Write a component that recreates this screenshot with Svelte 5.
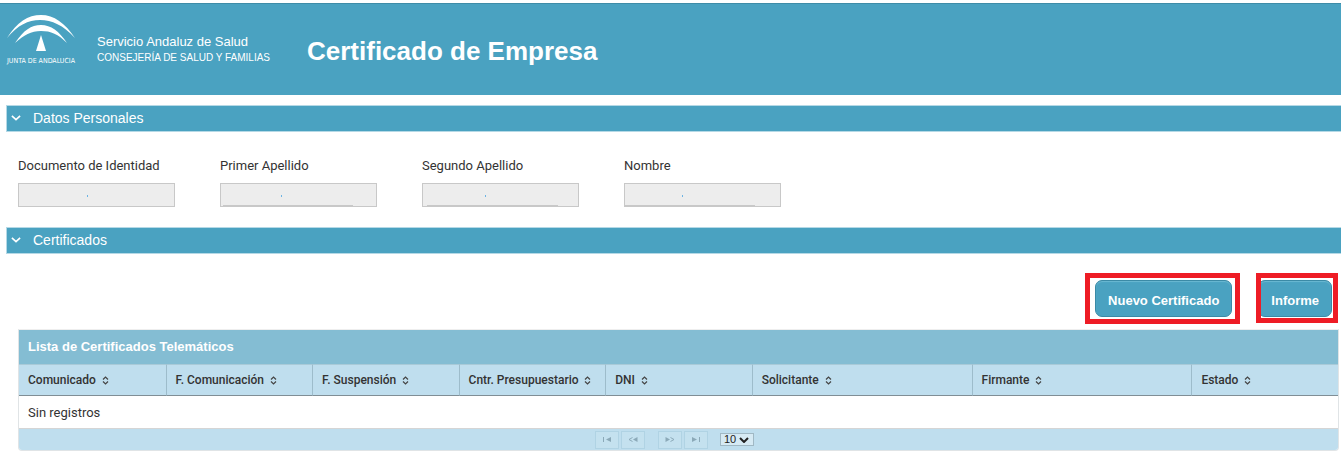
<script>
  const fields = [
    { id: "documento", label: "Documento de Identidad", mark: 68, line: 0, lineStart: 0 },
    { id: "apellido1", label: "Primer Apellido", mark: 60, line: 130, lineStart: 2 },
    { id: "apellido2", label: "Segundo Apellido", mark: 62, line: 131, lineStart: 4 },
    { id: "nombre", label: "Nombre", mark: 57, line: 130, lineStart: 0 },
  ];

  const columns = [
    { name: "Comunicado", size: "small" },
    { name: "F. Comunicación", size: "small" },
    { name: "F. Suspensión", size: "small" },
    { name: "Cntr. Presupuestario", size: "small" },
    { name: "DNI", size: "small" },
    { name: "Solicitante", size: "big" },
    { name: "Firmante", size: "big" },
    { name: "Estado", size: "small" },
  ];

  // solid triangles and open chevrons of the paginator buttons
  const pages = [
    { label: "Primera página", solid: "M9 1v5L4 3.5z", line: "M1.5 1v5" },
    { label: "Página anterior", solid: "M9.5 1v5L5 3.5z", line: "M4.5 1.5L1 3.5l3.5 2" },
    { label: "Página siguiente", solid: "M.5 1v5l4.5-2.5z", line: "M5.5 1.5l3.5 2-3.5 2" },
    { label: "Última página", solid: "M1 1v5L6 3.5z", line: "M8.5 1v5" },
  ];

  let openDatos = $state(true);
  let openCertificados = $state(true);
  let rows = $state("10");
</script>

{#snippet bar(title, open, toggle)}
  <h2 class="bar">
    <button type="button" aria-expanded={open} onclick={toggle}>
      <svg class:closed={!open} width="10" height="6" viewBox="0 0 10 6" aria-hidden="true">
        <path d="M.9 .8L5 4.6 9.1 .8" fill="none" stroke="#fff" stroke-width="1.6" />
      </svg>
      {title}
    </button>
  </h2>
{/snippet}

<header>
  <svg class="logo" width="72" height="52" viewBox="0 0 72 52" role="img" aria-label="Junta de Andalucía">
    <g fill="#fff">
      <path d="M2 24C12 8 23 1 36 1s24 8 34 23C58 11 47 6 35 6S13 11 2 24z" />
      <path d="M10 29C19 16 26 11 36 11s18 6 26 18C53 20 46 17 36 17s-17 4-26 12z" />
      <path d="M36 21l5 16H31z" />
      <text x="36" y="49" text-anchor="middle">JUNTA DE ANDALUCIA</text>
    </g>
  </svg>
  <div class="org">
    <div>Servicio Andaluz de Salud</div>
    <div class="dept">CONSEJERÍA DE SALUD Y FAMILIAS</div>
  </div>
  <h1>Certificado de Empresa</h1>
</header>

<main>
  {@render bar("Datos Personales", openDatos, () => (openDatos = !openDatos))}
  {#if openDatos}
    <div class="fields">
      {#each fields as f}
        <div class="field">
          <label for={f.id}>{f.label}</label>
          <input
            id={f.id}
            type="text"
            readonly
            style="--mark: {f.mark}px; --line: {f.line}px; --start: {f.lineStart}px"
          />
        </div>
      {/each}
    </div>
  {/if}

  {@render bar("Certificados", openCertificados, () => (openCertificados = !openCertificados))}
  {#if openCertificados}
    <div class="content">
      <div class="actions">
        <div class="frame"><button type="button">Nuevo Certificado</button></div>
        <div class="frame tight"><button type="button">Informe</button></div>
      </div>

      <div class="list">
        <table>
          <caption>Lista de Certificados Telemáticos</caption>
          <thead>
            <tr>
              {#each columns as c}
                <th class={c.size} scope="col">
                  {c.name}
                  <svg width="7" height="9" viewBox="0 0 7 9" aria-hidden="true">
                    <path d="M1 3.5l2.5-2.5L6 3.5M1 5.5L3.5 8 6 5.5" fill="none" stroke="#444" stroke-width="1.2" />
                  </svg>
                </th>
              {/each}
            </tr>
          </thead>
          <tbody>
            <tr><td colspan={columns.length}>Sin registros</td></tr>
          </tbody>
        </table>
        <div class="paginator">
          {#each pages as p}
            <button type="button" disabled aria-label={p.label}>
              <svg width="10" height="7" viewBox="0 0 10 7">
                <path d={p.solid} fill="#8ba9b8" />
                <path d={p.line} fill="none" stroke="#8ba9b8" />
              </svg>
            </button>
          {/each}
          <div class="rows">
            <select aria-label="Registros por página" bind:value={rows}>
              <option>10</option>
              <option>20</option>
              <option>50</option>
            </select>
            <svg width="10" height="6" viewBox="0 0 10 6" aria-hidden="true">
              <path d="M1 1l4 4 4-4" fill="none" stroke="#222" stroke-width="2" />
            </svg>
          </div>
        </div>
      </div>
    </div>
  {/if}
</main>

<style>
  :global(body) {
    background: #fff;
    color: #333;
    font-family: "Liberation Sans", Arial, sans-serif;
    font-size: 13px;
    overflow-x: hidden;
  }

  button,
  input,
  select {
    font-family: inherit;
    box-sizing: border-box;
    margin: 0;
  }

  header {
    display: flex;
    align-items: flex-start;
    box-sizing: border-box;
    height: 92px;
    margin-top: 3px;
    border-top: 1px solid #3e8ca8;
    background: #4aa2c1;
    color: #fff;
  }

  .logo {
    margin: 10px 0 0 5px;
  }

  .logo text {
    font-family: "Liberation Sans Narrow", "DejaVu Sans Condensed", sans-serif;
    font-size: 7px;
  }

  .org {
    width: 210px;
    margin: 29px 0 0 20px;
    line-height: 17px;
  }

  .dept {
    font-size: 10px;
    line-height: 15px;
  }

  h1 {
    margin: 32px 0 0;
    font-size: 26px;
    line-height: 30px;
  }

  main {
    padding: 10px 0 0 6px;
  }

  .bar {
    margin: 0;
    font-size: 14px;
    font-weight: normal;
  }

  .bar button {
    display: flex;
    align-items: center;
    gap: 12px;
    width: 100%;
    height: 27px;
    padding: 0 4px 2px;
    border: 1px solid #b5d9e6;
    border-right: 0;
    background: #4aa2c1;
    color: #fff;
    font-size: 14px;
    cursor: pointer;
  }

  .closed {
    transform: rotate(-90deg);
  }

  .fields {
    display: flex;
    gap: 45px;
    padding: 25px 12px 20px;
    font-family: Roboto, sans-serif;
  }

  .field label {
    display: block;
    margin-bottom: 8px;
    line-height: 18px;
  }

  .field input {
    display: block;
    width: 157px;
    height: 24px;
    border: 1px solid #c8c8c8;
    background:
      linear-gradient(#6cb4e4, #6cb4e4) var(--mark) 11px / 1px 2px no-repeat,
      linear-gradient(#c8c8c8, #c8c8c8) var(--start) 21px / var(--line) 1px no-repeat,
      #ededed;
  }

  .content {
    padding: 19px 2px 0 12px;
  }

  .actions {
    display: flex;
    justify-content: flex-end;
    align-items: flex-start;
    gap: 16px;
    margin-right: 1px;
    margin-bottom: 5px;
  }

  .frame {
    padding: 2px 3px 2px 5px;
    border: 5px solid #ee1c25;
    overflow: hidden;
  }

  .tight {
    padding: 2px 1px 1px 0;
  }

  .frame button {
    display: block;
    height: 37px;
    padding: 3px 12px 0;
    border: 1px solid #3b8aa6;
    border-radius: 7px;
    background: #4aa2c1;
    box-shadow: inset 0 1px 1px #6bb8d2;
    color: #fff;
    font-size: 13px;
    font-weight: bold;
    cursor: pointer;
  }

  /* the frame cuts the left edge of its button */
  .tight button {
    margin-left: -3px;
  }

  .list {
    border: 1px solid #e0e4e6;
    border-top-color: #eee;
    border-radius: 0 0 4px 4px;
    overflow: hidden;
  }

  table {
    width: 100%;
    table-layout: fixed;
    border-collapse: separate;
    border-spacing: 0;
  }

  caption {
    padding: 0 9px;
    background: #84bdd3;
    color: #fff;
    font-weight: bold;
    line-height: 34px;
    text-align: left;
  }

  th {
    box-sizing: border-box;
    height: 32px;
    padding: 0 9px;
    border-top: 1px solid #a9cad8;
    border-left: 1px solid #9dbccb;
    border-bottom: 1px solid #808e95;
    background: #bfdeee;
    font-family: Roboto, sans-serif;
    font-size: 12px;
    font-weight: 500;
    text-align: left;
    white-space: nowrap;
  }

  th:first-child {
    border-left: 0;
  }

  th svg {
    margin-left: 3px;
    vertical-align: -1px;
  }

  .small {
    width: 11.11%;
  }

  .big {
    width: 16.67%;
  }

  td {
    box-sizing: border-box;
    height: 33px;
    padding: 0 9px;
    border-bottom: 1px solid #d5d5d5;
    font-family: Roboto, sans-serif;
  }

  .paginator {
    display: flex;
    justify-content: center;
    align-items: center;
    gap: 2px;
    height: 21px;
    padding-right: 8px;
    background: #bfdeee;
  }

  .paginator button {
    display: flex;
    align-items: center;
    justify-content: center;
    width: 24px;
    height: 18px;
    padding: 0;
    border: 1px solid #b0d3e4;
    background: #c4e1ef;
  }

  .paginator button:nth-child(3) {
    margin-left: 11px;
  }

  .rows {
    display: flex;
    align-items: center;
    margin-left: 10px;
  }

  select {
    width: 34px;
    height: 13px;
    padding: 0 3px;
    border: 1px solid #a0b8c4;
    border-radius: 0;
    background: #d6eaf4;
    color: #222;
    appearance: none;
    font-size: 11px;
    line-height: 11px;
  }

  .rows svg {
    width: 10px;
    margin-left: -15px;
    margin-right: 5px;
    pointer-events: none;
  }
</style>
